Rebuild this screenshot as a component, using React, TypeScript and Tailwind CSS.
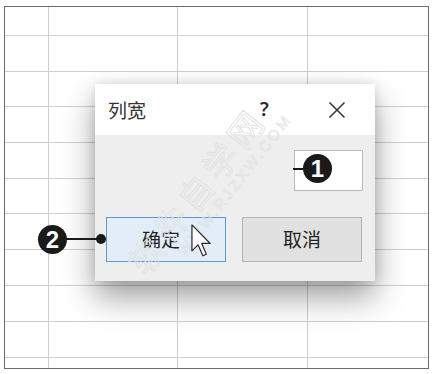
import React from "react";

const cols = [44, 130, 130, 121];
const rows = [29, 36, 35, 36, 36, 35, 36, 36, 36, 36, 12];

const Sheet: React.FC = () => (
  <div className="absolute left-[4px] top-[6px] w-[425px] h-[363px] border border-[#6b6b6b] overflow-hidden">
    {rows.map((h, r) => (
      <div
        key={r}
        className="flex border-b-[1.5px] border-[#cfcfcf] last:border-b-0"
        style={{ height: h }}
      >
        {cols.map((w, c) => (
          <div
            key={c}
            className="h-full border-r-[1.5px] border-[#cfcfcf] last:border-r-0"
            style={{ width: w }}
          />
        ))}
      </div>
    ))}
  </div>
);

const Badge: React.FC<{ n: string; className: string }> = ({ n, className }) => (
  <div
    className={
      "absolute w-[29px] h-[29px] rounded-full bg-[#1a1a1a] text-white flex items-center justify-center text-[24px] font-bold leading-none font-['Liberation_Sans',sans-serif] " +
      className
    }
  >
    {n}
  </div>
);

const Cursor: React.FC = () => (
  <svg
    className="absolute left-[191px] top-[224px]"
    width="21"
    height="33"
    viewBox="0 0 12 19"
  >
    <path
      d="M0.5 0.5 L0.5 15.5 L4 12 L6.8 18.3 L8.8 17.4 L6.1 11.2 L11 11.2 Z"
      fill="#ffffff"
      stroke="#2a2a2a"
      strokeWidth="0.7"
      strokeLinejoin="round"
    />
  </svg>
);

const Watermark: React.FC = () => (
  <div className="absolute left-[92px] top-[146px] w-[260px] origin-center -rotate-[52deg] pointer-events-none select-none">
    <div className="text-[34px] leading-none tracking-[6px] text-transparent [-webkit-text-stroke:0.8px_#e0e0e0] font-['Noto_Sans_CJK_SC',sans-serif]">
      软件自学网
    </div>
    <div className="mt-[2px] ml-[40px] text-[15px] leading-none tracking-[3px] text-transparent [-webkit-text-stroke:0.6px_#e0e0e0] font-['Liberation_Sans',sans-serif]">
      WWW.RJZXW.COM
    </div>
  </div>
);

export default function App() {
  return (
    <div className="relative w-[433px] h-[374px] bg-white overflow-hidden font-['Noto_Sans_CJK_SC',sans-serif]">
      <Sheet />

      {/* Dialog */}
      <div className="absolute left-[95px] top-[84px] w-[280px] h-[197px] flex flex-col bg-[#eeeeee] shadow-[0_16px_30px_rgba(0,0,0,0.38),0_0_10px_rgba(0,0,0,0.12)]">
        <div className="h-[51px] bg-white flex items-center pl-[13px] text-[#333333]">
          <span className="w-[40px] text-[19px] leading-none">列宽</span>
          <span className="ml-[112px] w-[10px] text-[19px] leading-none font-semibold text-[#2a2a2a] font-['Noto_Sans',sans-serif]">?</span>
          <svg className="ml-[58px]" width="18" height="18" viewBox="0 0 18 18">
            <path d="M1.5 1.5 L16.5 16.5 M16.5 1.5 L1.5 16.5" stroke="#333333" strokeWidth="1.5" />
          </svg>
        </div>
        <div className="flex-1 flex flex-col px-[11px]">
          <div className="mt-[15px] flex justify-end pr-[1px]">
            <div className="w-[69px] h-[41px] bg-white border border-[#b9b9b9]" />
          </div>
          <div className="mt-[26px] flex gap-[16px]">
            <button className="w-[120px] h-[45px] bg-[#e2edf8] border-[1.5px] border-[#5a9ad8] text-[19px] text-[#222222] pr-[10px]">
              确定
            </button>
            <button className="w-[120px] h-[45px] bg-[#e1e1e1] border-[1.5px] border-[#b3b3b3] text-[19px] text-[#222222]">
              取消
            </button>
          </div>
        </div>
      </div>

      <Watermark />
      <Cursor />

      {/* Callout 1 */}
      <div className="absolute left-[293px] top-[168px] w-[12px] h-[2px] bg-[#1a1a1a]" />
      <Badge n="1" className="left-[303px] top-[154px]" />

      {/* Callout 2 */}
      <Badge n="2" className="left-[38px] top-[225px]" />
      <div className="absolute left-[66px] top-[238px] w-[34px] h-[2px] bg-[#1a1a1a]" />
      <div className="absolute left-[96px] top-[234px] w-[10px] h-[10px] rounded-full bg-[#1a1a1a]" />
    </div>
  );
}
